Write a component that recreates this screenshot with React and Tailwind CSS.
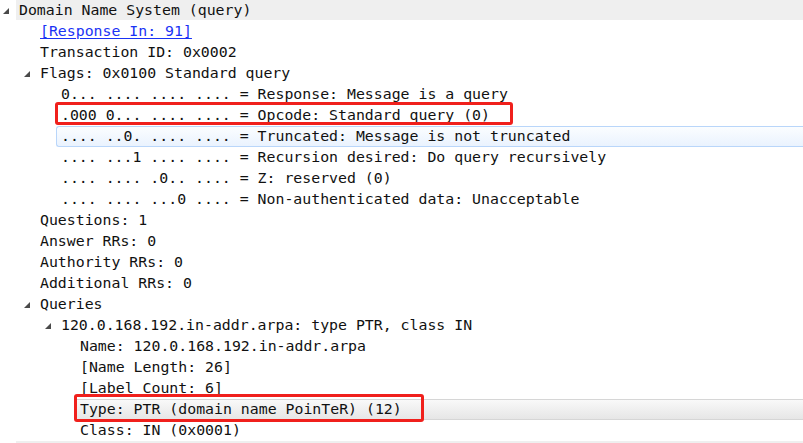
const rows = [
  { text: "Domain Name System (query)", x: 19, open: true, header: true },
  { text: "[Response In: 91]", x: 40, link: true },
  { text: "Transaction ID: 0x0002", x: 40 },
  { text: "Flags: 0x0100 Standard query", x: 40, open: true },
  { text: "0... .... .... .... = Response: Message is a query", x: 61 },
  { text: ".000 0... .... .... = Opcode: Standard query (0)", x: 61 },
  { text: ".... ..0. .... .... = Truncated: Message is not truncated", x: 61, selected: true },
  { text: ".... ...1 .... .... = Recursion desired: Do query recursively", x: 61 },
  { text: ".... .... .0.. .... = Z: reserved (0)", x: 61 },
  { text: ".... .... ...0 .... = Non-authenticated data: Unacceptable", x: 61 },
  { text: "Questions: 1", x: 40 },
  { text: "Answer RRs: 0", x: 40 },
  { text: "Authority RRs: 0", x: 40 },
  { text: "Additional RRs: 0", x: 40 },
  { text: "Queries", x: 40, open: true },
  { text: "120.0.168.192.in-addr.arpa: type PTR, class IN", x: 61, open: true },
  { text: "Name: 120.0.168.192.in-addr.arpa", x: 80 },
  { text: "[Name Length: 26]", x: 80 },
  { text: "[Label Count: 6]", x: 80 },
  { text: "Type: PTR (domain name PoinTeR) (12)", x: 80, hover: true },
  { text: "Class: IN (0x0001)", x: 80 },
];

function Expander() {
  return (
    <svg width="6" height="6" viewBox="0 0 6 6" className="shrink-0">
      <path d="M6 0 L6 6 L0 6 Z" fill="#4a4a4a" />
    </svg>
  );
}

function Row({ row }) {
  const spacer = row.header ? 16 : row.x - 5;
  const pr = row.header ? 7 : 5;

  let band = "";
  if (row.header) band = "bg-[#efefef] h-[20px] self-start";
  else if (row.selected)
    band =
      "h-[21px] border border-r-0 border-[#b9d6fa] rounded-l-[3px] bg-gradient-to-b from-[#fbfdff] to-[#eaf3fe]";
  else if (row.hover)
    band =
      "h-[21px] border-y border-[#d6d6d6] bg-gradient-to-b from-[#f9f9f9] to-[#e6e6e6]";
  else band = "h-full";

  return (
    <div className="flex h-[21px] items-center">
      <div
        className="flex h-full shrink-0 items-center justify-end"
        style={{ width: spacer, paddingRight: pr }}
      >
        {row.open && <Expander />}
      </div>
      <div
        className={`flex flex-1 items-center whitespace-pre ${band}`}
        style={{ paddingLeft: row.x - spacer - (row.selected ? 1 : 0) }}
      >
        {row.link ? (
          <span className="text-[#1a33f5] underline underline-offset-2">
            {row.text}
          </span>
        ) : (
          <span>{row.text}</span>
        )}
      </div>
    </div>
  );
}

export default function App() {
  return (
    <div className="relative h-[443px] w-[803px] overflow-hidden bg-white font-['DejaVu_Sans_Mono',monospace] text-[14.85px] text-[#111]">
      <div className="flex flex-col">
        {rows.map((row, i) => (
          <Row key={i} row={row} />
        ))}
        {/* next protocol row, cut off */}
        <div className="ml-[16px] h-[20px] bg-[#efefef]" />
      </div>

      {/* red annotation boxes */}
      <div className="absolute left-[55px] top-[102px] h-[23px] w-[458px] rounded-[3px] border-[3px] border-[#f0201c]" />
      <div className="absolute left-[74px] top-[394px] h-[28px] w-[350px] rounded-[3px] border-[3px] border-[#f0201c]" />
    </div>
  );
}
